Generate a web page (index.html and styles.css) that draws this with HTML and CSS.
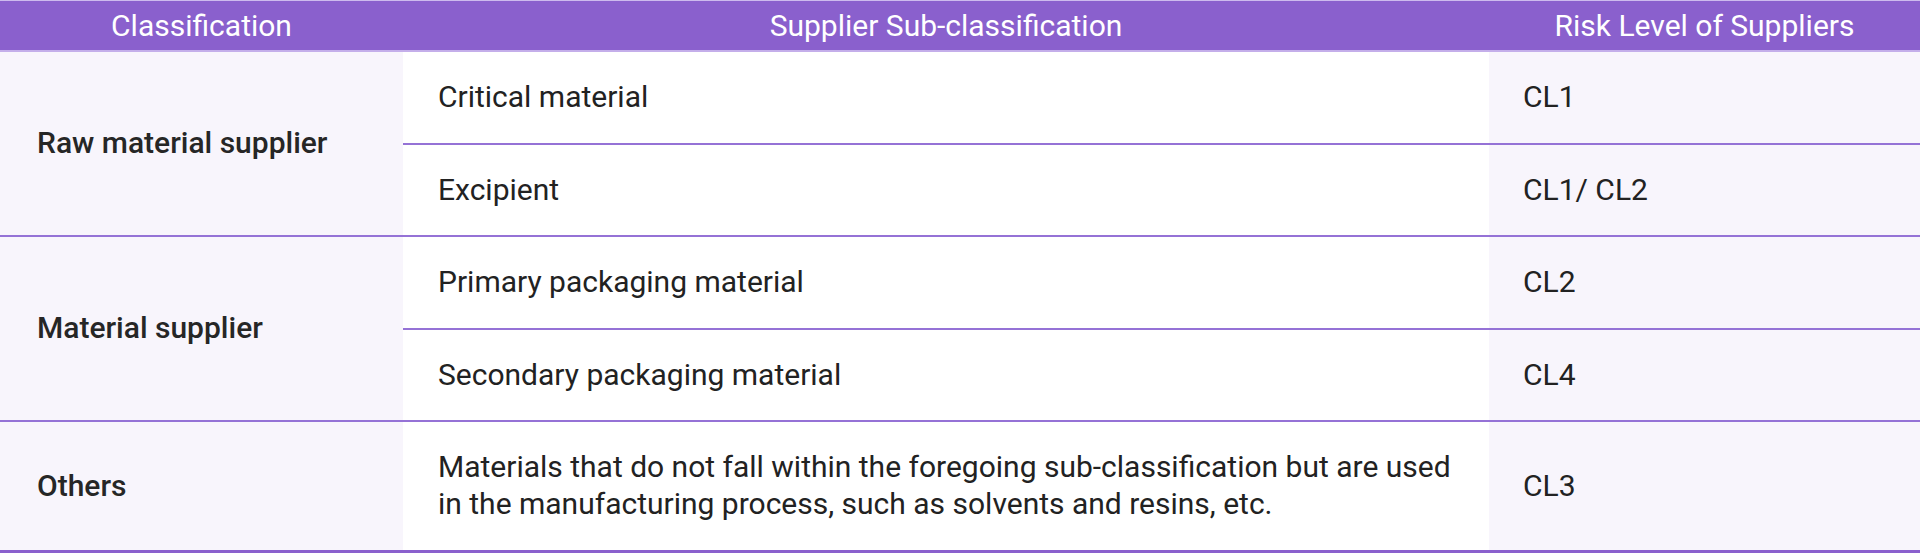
FILE: index.html
```html
<!DOCTYPE html>
<html lang="en">
<head>
<meta charset="utf-8">
<title>Supplier Risk Levels</title>
<link rel="stylesheet" href="styles.css">
</head>
<body>
<table class="risk-table">
  <colgroup>
    <col class="col-class">
    <col class="col-sub">
    <col class="col-risk">
  </colgroup>
  <thead>
    <tr>
      <th>Classification</th>
      <th>Supplier Sub-classification</th>
      <th>Risk Level of Suppliers</th>
    </tr>
  </thead>
  <tbody>
    <tr class="group-start">
      <td class="cls" rowspan="2">Raw material supplier</td>
      <td class="sub">Critical material</td>
      <td class="risk">CL1</td>
    </tr>
    <tr class="group-end">
      <td class="sub">Excipient</td>
      <td class="risk">CL1/ CL2</td>
    </tr>
    <tr class="group-start">
      <td class="cls" rowspan="2">Material supplier</td>
      <td class="sub">Primary packaging material</td>
      <td class="risk">CL2</td>
    </tr>
    <tr class="group-end">
      <td class="sub">Secondary packaging material</td>
      <td class="risk">CL4</td>
    </tr>
    <tr class="group-end last">
      <td class="cls">Others</td>
      <td class="sub">Materials that do not fall within the foregoing sub-classification but are used in the manufacturing process, such as solvents and resins, etc.</td>
      <td class="risk">CL3</td>
    </tr>
  </tbody>
</table>
</body>
</html>
```
FILE: styles.css
```css
html, body {
  margin: 0;
  padding: 0;
  background: #ffffff;
}

body {
  font-family: Roboto, "Liberation Sans", Arial, sans-serif;
  color: #222222;
}

.risk-table {
  width: 1920px;
  border-collapse: collapse;
  table-layout: fixed;
  font-size: 30px;
}

.col-class { width: 403px; }
.col-sub { width: 1086px; }
.col-risk { width: 431px; }

.risk-table thead th {
  background: #8a60cd;
  color: #ffffff;
  font-weight: 400;
  height: 49px;
  padding: 0;
  line-height: 49px;
  text-align: center;
  border-top: 1px solid #cdbbee;
  border-bottom: 2px solid #c4aeea;
}

.risk-table td {
  padding: 27px 22px 27px 36px;
  line-height: 36.6px;
  vertical-align: middle;
  text-align: left;
  border-bottom: 2px solid #9572d6;
}

.risk-table td.cls {
  background: #f8f5fc;
  font-weight: 500;
  color: #262626;
  padding-left: 37px;
}

.risk-table td.sub {
  background: #ffffff;
  padding-left: 35px;
}

.risk-table td.risk {
  background: #f8f5fc;
  padding-left: 34px;
}

.risk-table tr.last td {
  border-bottom: 3px solid #8a60cd;
}
```
